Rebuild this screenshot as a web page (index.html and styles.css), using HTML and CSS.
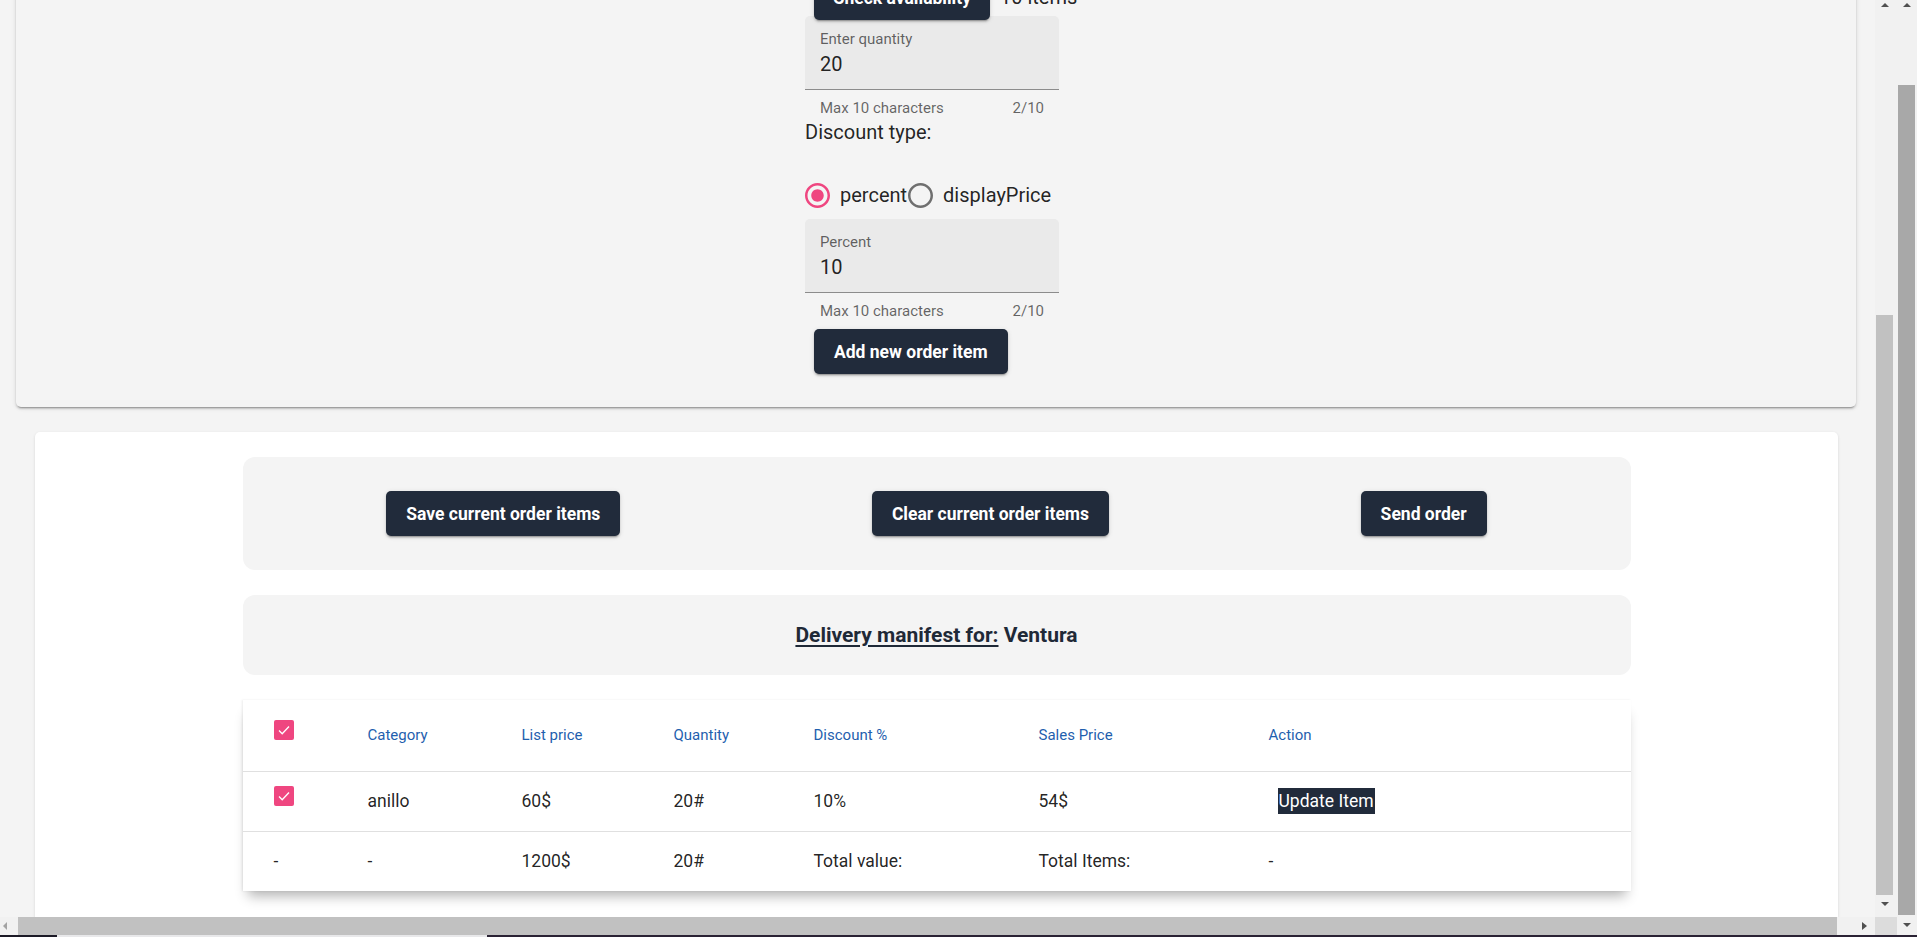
FILE: index.html
```html
<!DOCTYPE html>
<html lang="en">
<head>
<meta charset="utf-8">
<title>Order items</title>
<link rel="stylesheet" href="styles.css">
</head>
<body>
<div class="window">
  <div class="left">
    <div class="view">
      <div class="content">
        <section class="top-card">
          <div class="form">
            <div class="btn-row">
              <button class="btn btn-over">Check availability</button>
              <span class="items-count">10 items</span>
            </div>
            <div class="field">
              <div class="field-label">Enter quantity</div>
              <div class="field-value">20</div>
            </div>
            <div class="hint"><span>Max 10 characters</span><span>2/10</span></div>
            <div class="group-label">Discount type:</div>
            <div class="radio-row">
              <svg class="radio on" viewBox="2 2 20 20" width="25" height="25"><path d="M12 7c-2.76 0-5 2.24-5 5s2.24 5 5 5 5-2.24 5-5-2.24-5-5-5zm0-5C6.48 2 2 6.48 2 12s4.48 10 10 10 10-4.48 10-10S17.52 2 12 2zm0 18c-4.42 0-8-3.58-8-8s3.58-8 8-8 8 3.58 8 8-3.58 8-8 8z"/></svg>
              <span class="radio-text">percent</span>
              <svg class="radio off" viewBox="2 2 20 20" width="25" height="25"><path d="M12 2C6.48 2 2 6.48 2 12s4.48 10 10 10 10-4.48 10-10S17.52 2 12 2zm0 18c-4.42 0-8-3.58-8-8s3.58-8 8-8 8 3.58 8 8-3.58 8-8 8z"/></svg>
              <span class="radio-text">displayPrice</span>
            </div>
            <div class="field field-2">
              <div class="field-label">Percent</div>
              <div class="field-value">10</div>
            </div>
            <div class="hint"><span>Max 10 characters</span><span>2/10</span></div>
            <button class="btn btn-add">Add new order item</button>
          </div>
        </section>

        <section class="order-card">
          <div class="wrap">
            <div class="actions-box">
              <button class="btn">Save current order items</button>
              <button class="btn">Clear current order items</button>
              <button class="btn">Send order</button>
            </div>
            <div class="manifest-box">
              <span class="manifest-title">Delivery manifest for:</span>&nbsp;<span class="manifest-name">Ventura</span>
            </div>
            <table class="items">
              <colgroup>
                <col class="c1"><col class="c2"><col class="c3"><col class="c4"><col class="c5"><col class="c6"><col class="c7">
              </colgroup>
              <thead>
                <tr>
                  <th class="first"><span class="cb"><svg viewBox="0 0 20 20" width="20" height="20"><path d="M5 10.5l3.2 3.2L15 6.5" fill="none" stroke="#fff" stroke-width="1.3"/></svg></span></th>
                  <th>Category</th>
                  <th>List price</th>
                  <th>Quantity</th>
                  <th>Discount %</th>
                  <th>Sales Price</th>
                  <th>Action</th>
                </tr>
              </thead>
              <tbody>
                <tr>
                  <td class="first"><span class="cb"><svg viewBox="0 0 20 20" width="20" height="20"><path d="M5 10.5l3.2 3.2L15 6.5" fill="none" stroke="#fff" stroke-width="1.3"/></svg></span></td>
                  <td>anillo</td>
                  <td>60$</td>
                  <td>20#</td>
                  <td>10%</td>
                  <td>54$</td>
                  <td><span class="update">Update Item</span></td>
                </tr>
                <tr>
                  <td class="first">-</td>
                  <td>-</td>
                  <td>1200$</td>
                  <td>20#</td>
                  <td>Total value:</td>
                  <td>Total Items:</td>
                  <td>-</td>
                </tr>
              </tbody>
            </table>
          </div>
        </section>
      </div>
      <div class="vbar inner">
        <span class="arr up"></span>
        <span class="thumb"></span>
        <span class="arr down"></span>
      </div>
    </div>
    <div class="hbar-row">
      <div class="hbar">
        <span class="arr lft"></span>
        <span class="hthumb"></span>
        <span class="arr rgt"></span>
      </div>
      <div class="corner"></div>
    </div>
  </div>
  <div class="vbar outer">
    <span class="arr up"></span>
    <span class="thumb"></span>
    <span class="arr down"></span>
  </div>
</div>
<div class="taskbar"><span class="tb-a"></span><span class="tb-b"></span><span class="tb-c"></span></div>
</body>
</html>
```

FILE: styles.css
```css
* { box-sizing: border-box; }
html, body { margin: 0; padding: 0; }
body {
  width: 1917px;
  height: 937px;
  overflow: hidden;
  background: #f4f4f4;
  font-family: Roboto, "Liberation Sans", sans-serif;
  color: rgba(0,0,0,.87);
}

.window { display: flex; height: 935px; }
.left { width: 1897px; display: flex; flex-direction: column; }
.view { display: flex; height: 917px; }
.content { width: 1875px; height: 917px; overflow: hidden; }

/* ---------- top card ---------- */
.top-card {
  margin: -49px 19px 0 16px;
  padding: 24px 0 33px;
  background: #f4f4f4;
  border-radius: 5px;
  box-shadow: 0 3px 1px -2px rgba(0,0,0,.2), 0 2px 2px 0 rgba(0,0,0,.14), 0 1px 5px 0 rgba(0,0,0,.12);
}
.form { width: 262px; margin: 0 auto; }
.btn-row { height: 41px; display: flex; align-items: flex-start; white-space: nowrap; }
.btn {
  height: 45px;
  padding: 0 20px;
  border: 0;
  border-radius: 5px;
  background: #212b3b;
  color: #fff;
  font-family: Roboto, "Liberation Sans", sans-serif;
  font-size: 17.5px;
  font-weight: 700;
  letter-spacing: 0;
  box-shadow: 0 3px 1px -2px rgba(0,0,0,.2), 0 2px 2px 0 rgba(0,0,0,.14), 0 1px 5px 0 rgba(0,0,0,.12);
  white-space: nowrap;
  flex: none;
}
.btn-over { position: relative; z-index: 1; margin-left: 9px; width: 176px; padding: 0; }
.items-count { flex: none; margin-left: 10px; font-size: 20px; line-height: 45px; }

.field {
  width: 254px;
  height: 74px;
  padding: 14px 15px 0;
  background: #eaeaea;
  border-bottom: 1px solid #8c8c8c;
  border-radius: 5px 5px 0 0;
}
.field-label { font-size: 15px; line-height: 18px; color: rgba(0,0,0,.6); }
.field-value { margin-top: 4px; font-size: 20px; line-height: 24px; color: rgba(0,0,0,.87); }
.hint {
  width: 254px;
  display: flex;
  justify-content: space-between;
  padding: 9px 15px 0;
  font-size: 15px;
  line-height: 18px;
  color: rgba(0,0,0,.6);
}
.group-label { margin-top: 3px; font-size: 20px; line-height: 24px; color: rgba(0,0,0,.87); }
.radio-row { margin-top: 36px; height: 30px; display: flex; align-items: center; white-space: nowrap; }
.radio { flex: none; }
.radio.on { fill: #ef4680; }
.radio.off { fill: #6f6f6f; margin-left: 1px; }
.radio-text { margin-left: 10px; font-size: 20px; line-height: 30px; color: rgba(0,0,0,.87); }
.field-2 { margin-top: 9px; }
.btn-add { display: block; margin: 9px 0 0 9px; }

/* ---------- order card ---------- */
.order-card {
  margin: 25px 37px 0 35px;
  padding: 25px 0 40px;
  background: #fff;
  border-radius: 5px;
  box-shadow: 0 1px 3px rgba(0,0,0,.12);
}
.wrap { width: 1388px; margin: 0 auto; display: flex; flex-direction: column; gap: 25px; }
.actions-box {
  height: 113px;
  padding: 0 18px;
  background: #f4f4f4;
  border-radius: 12px;
  display: flex;
  align-items: center;
  justify-content: space-around;
}
.manifest-box {
  height: 80px;
  background: #f4f4f4;
  border-radius: 12px;
  display: flex;
  align-items: center;
  justify-content: center;
  font-size: 21px;
  font-weight: 700;
  color: #1f2937;
}
.manifest-title { text-decoration: underline; text-underline-offset: 3px; }

.items {
  width: 1388px;
  table-layout: fixed;
  border-collapse: collapse;
  background: #fff;
  box-shadow: 0 10px 12px -5px rgba(0,0,0,.3), -1px 0 2px rgba(0,0,0,.08);
}
.c1 { width: 125px; } .c2 { width: 154px; } .c3 { width: 152px; } .c4 { width: 140px; }
.c5 { width: 225px; } .c6 { width: 230px; } .c7 { width: 362px; }
.items th, .items td { padding: 0; text-align: left; vertical-align: middle; white-space: nowrap; }
.items th.first, .items td.first { padding-left: 31px; }
.items th {
  height: 71px;
  font-size: 15px;
  font-weight: 400;
  color: #1f5fae;
  border-bottom: 1px solid #e0e0e0;
}
.items td { height: 60px; font-size: 17.5px; color: rgba(0,0,0,.87); }
.items tbody tr:first-child td { border-bottom: 1px solid #e0e0e0; }
.cb {
  display: inline-block;
  width: 20px;
  height: 20px;
  margin-bottom: 10px;
  vertical-align: middle;
  border-radius: 2px;
  background: #ef4680;
}
.cb svg { display: block; }
.update {
  display: inline-block;
  margin-left: 9px;
  padding: 0 1px;
  line-height: 26px;
  background: #212b3b;
  color: #fff;
}

/* ---------- scrollbars ---------- */
.vbar { display: flex; flex-direction: column; align-items: center; background: #f1f1f1; }
.vbar.inner { width: 22px; height: 917px; }
.vbar.outer { width: 20px; height: 935px; }
.arr { display: block; width: 0; height: 0; border-style: solid; }
.arr.up { margin-top: 3px; border-width: 0 4.5px 4px; border-color: transparent transparent #505050; }
.arr.down { border-width: 4px 4.5px 0; border-color: #505050 transparent transparent; }
.vbar.inner .thumb { display: block; width: 17px; margin-top: 308px; height: 580px; background: #c1c1c1; margin-left: -3px; }
.vbar.inner .arr.down { margin-top: 7px; margin-left: -3px; }
.vbar.outer .thumb { display: block; width: 17px; margin-top: 78px; height: 830px; background: #a8a8a8; margin-left: -1px; }
.vbar.outer .arr.down { margin-top: 8px; }
.vbar.inner .arr.up { margin-left: -3px; }

.hbar-row { display: flex; height: 18px; }
.hbar { width: 1875px; display: flex; align-items: center; background: #f1f1f1; }
.arr.lft { margin-left: 3px; border-width: 4px 4px 4px 0; border-color: transparent #a3a3a3 transparent transparent; }
.hthumb { display: block; height: 18px; margin-left: 11px; width: 1819px; background: #c1c1c1; }
.arr.rgt { margin-left: 25px; border-width: 4px 0 4px 5px; border-color: transparent transparent transparent #505050; }
.corner { width: 22px; background: #dcdcdc; }

.taskbar { display: flex; height: 2px; }
.tb-a { width: 57px; background: #1c1a26; }
.tb-b { width: 430px; background: #e8e8ea; }
.tb-c { flex: 1; background: #2a2234; }
```
